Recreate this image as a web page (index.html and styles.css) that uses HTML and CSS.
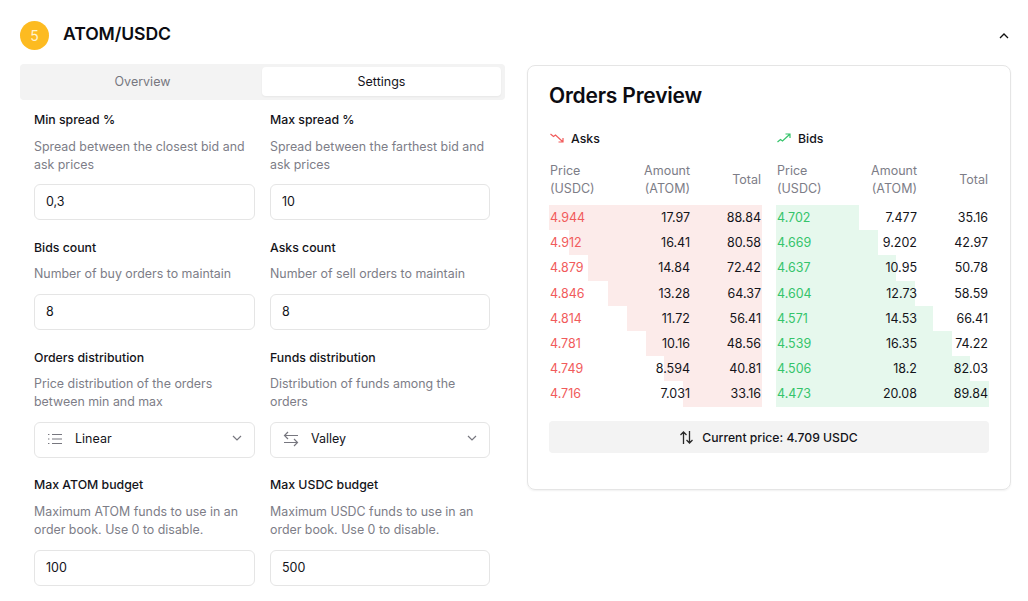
FILE: index.html
```html
<!DOCTYPE html>
<html lang="en">
<head>
<meta charset="utf-8">
<title>ATOM/USDC</title>
<link rel="stylesheet" href="styles.css">
</head>
<body>
<div class="page">
  <header class="head">
    <span class="step">5</span>
    <h1 class="pair">ATOM/USDC</h1>
    <svg class="collapse" width="10" height="6" viewBox="0 0 10 6"><path d="M1 5l4-4 4 4" fill="none" stroke="#111" stroke-width="1.3"/></svg>
  </header>
  <main class="columns">
    <section class="left">
      <div class="tabs">
        <div class="tab">Overview</div>
        <div class="tab active">Settings</div>
      </div>
      <div class="form">
        <div class="field">
          <div class="label">Min spread %</div>
          <p class="desc">Spread between the closest bid and ask prices</p>
          <input class="input" value="0,3">
        </div>
        <div class="field">
          <div class="label">Max spread %</div>
          <p class="desc">Spread between the farthest bid and ask prices</p>
          <input class="input" value="10">
        </div>
        <div class="field">
          <div class="label">Bids count</div>
          <p class="desc">Number of buy orders to maintain</p>
          <input class="input" value="8">
        </div>
        <div class="field">
          <div class="label">Asks count</div>
          <p class="desc">Number of sell orders to maintain</p>
          <input class="input" value="8">
        </div>
        <div class="field">
          <div class="label">Orders distribution</div>
          <p class="desc">Price distribution of the orders between min and max</p>
          <div class="select">
            <svg class="sel-icon" width="16" height="16" viewBox="0 0 16 16" fill="none" stroke="#77777f" stroke-width="1.2"><path d="M5 3.5h10M5 8h10M5 12.5h10M1 3.5h1.4M1 8h1.4M1 12.5h1.4"/></svg>
            <span class="sel-text">Linear</span>
            <svg class="chev" width="10" height="6" viewBox="0 0 10 6"><path d="M1 1l4 4 4-4" fill="none" stroke="#77777f" stroke-width="1.2"/></svg>
          </div>
        </div>
        <div class="field">
          <div class="label">Funds distribution</div>
          <p class="desc">Distribution of funds among the orders</p>
          <div class="select">
            <svg class="sel-icon" width="16" height="16" viewBox="0 0 16 16" fill="none" stroke="#77777f" stroke-width="1.2"><path d="M15 4.5H1.5M5 1L1.5 4.5 5 8M1 11.5h13.5M11 8l3.5 3.5L11 15"/></svg>
            <span class="sel-text">Valley</span>
            <svg class="chev" width="10" height="6" viewBox="0 0 10 6"><path d="M1 1l4 4 4-4" fill="none" stroke="#77777f" stroke-width="1.2"/></svg>
          </div>
        </div>
        <div class="field">
          <div class="label">Max ATOM budget</div>
          <p class="desc">Maximum ATOM funds to use in an order book. Use 0 to disable.</p>
          <input class="input" value="100">
        </div>
        <div class="field">
          <div class="label">Max USDC budget</div>
          <p class="desc">Maximum USDC funds to use in an order book. Use 0 to disable.</p>
          <input class="input" value="500">
        </div>
      </div>
    </section>
    <section class="card">
      <h2 class="card-title">Orders Preview</h2>
      <div class="books">
        <div class="book asks">
          <div class="side">
            <svg width="14" height="10" viewBox="0 0 14 10" fill="none" stroke="#f15b5b" stroke-width="1.2"><path d="M0.5 1L3.5 3.5 5.5 2l7 6.5M8.5 9h4.5V5"/></svg>
            <span>Asks</span>
          </div>
          <div class="row th"><span>Price<br>(USDC)</span><span class="num">Amount<br>(ATOM)</span><span class="num">Total</span></div>
          <div class="row"><i class="bar" style="width:100%"></i><span class="price">4.944</span><span class="num">17.97</span><span class="num">88.84</span></div>
          <div class="row"><i class="bar" style="width:90.7%"></i><span class="price">4.912</span><span class="num">16.41</span><span class="num">80.58</span></div>
          <div class="row"><i class="bar" style="width:81.5%"></i><span class="price">4.879</span><span class="num">14.84</span><span class="num">72.42</span></div>
          <div class="row"><i class="bar" style="width:72.5%"></i><span class="price">4.846</span><span class="num">13.28</span><span class="num">64.37</span></div>
          <div class="row"><i class="bar" style="width:63.5%"></i><span class="price">4.814</span><span class="num">11.72</span><span class="num">56.41</span></div>
          <div class="row"><i class="bar" style="width:54.7%"></i><span class="price">4.781</span><span class="num">10.16</span><span class="num">48.56</span></div>
          <div class="row"><i class="bar" style="width:45.9%"></i><span class="price">4.749</span><span class="num">8.594</span><span class="num">40.81</span></div>
          <div class="row"><i class="bar" style="width:37.3%"></i><span class="price">4.716</span><span class="num">7.031</span><span class="num">33.16</span></div>
        </div>
        <div class="book bids">
          <div class="side">
            <svg width="14" height="10" viewBox="0 0 14 10" fill="none" stroke="#35c46b" stroke-width="1.2"><path d="M0.5 9L3.5 6.5 5.5 8l7-6.5M8.5 1h4.5v4"/></svg>
            <span>Bids</span>
          </div>
          <div class="row th"><span>Price<br>(USDC)</span><span class="num">Amount<br>(ATOM)</span><span class="num">Total</span></div>
          <div class="row"><i class="bar" style="width:39.1%"></i><span class="price">4.702</span><span class="num">7.477</span><span class="num">35.16</span></div>
          <div class="row"><i class="bar" style="width:47.8%"></i><span class="price">4.669</span><span class="num">9.202</span><span class="num">42.97</span></div>
          <div class="row"><i class="bar" style="width:56.5%"></i><span class="price">4.637</span><span class="num">10.95</span><span class="num">50.78</span></div>
          <div class="row"><i class="bar" style="width:65.2%"></i><span class="price">4.604</span><span class="num">12.73</span><span class="num">58.59</span></div>
          <div class="row"><i class="bar" style="width:73.9%"></i><span class="price">4.571</span><span class="num">14.53</span><span class="num">66.41</span></div>
          <div class="row"><i class="bar" style="width:82.6%"></i><span class="price">4.539</span><span class="num">16.35</span><span class="num">74.22</span></div>
          <div class="row"><i class="bar" style="width:91.3%"></i><span class="price">4.506</span><span class="num">18.2</span><span class="num">82.03</span></div>
          <div class="row"><i class="bar" style="width:100%"></i><span class="price">4.473</span><span class="num">20.08</span><span class="num">89.84</span></div>
        </div>
      </div>
      <div class="current">
        <svg width="13" height="13" viewBox="0 0 13 13" fill="none" stroke="#2a2a2a" stroke-width="1.3"><path d="M3.5 13V1M0.5 4l3-3 3 3M9.5 0v12M6.5 9l3 3 3-3"/></svg>
        <span>Current price: 4.709 USDC</span>
      </div>
    </section>
  </main>
</div>
</body>
</html>
```

FILE: styles.css
```css
* { box-sizing: border-box; }
html, body { margin: 0; height: 601px; overflow: hidden; background: #fff; }
body { font-family: "Inter", "Open Sans", sans-serif; font-size: 12.5px; color: #14141a; }
.page { padding: 21px 18px 0 20px; }

.head { display: flex; align-items: center; height: 29px; }
.step { width: 29px; height: 29px; border-radius: 50%; background: #fdbb21; color: #fff3d0; font-size: 14px; display: flex; align-items: center; justify-content: center; }
.pair { margin: 0 0 4px 14px; font-size: 17.6px; line-height: 24px; font-weight: 600; color: #0c0c12; letter-spacing: -0.1px; }
.collapse { margin: 0 1px 0 auto; }

.columns { display: flex; gap: 22px; align-items: flex-start; margin-top: 14px; }
.left { width: 485px; flex: none; }
.tabs { display: grid; grid-template-columns: 239px 239px; height: 36px; padding: 3px 4px 4px 3px; background: #f3f3f3; border-radius: 4px; }
.tab { display: flex; align-items: center; justify-content: center; color: #77777f; border-radius: 4px; }
.tab.active { background: #fff; color: #14141a; box-shadow: 0 1px 2px rgba(0,0,0,.05); }

.form { display: grid; grid-template-columns: 221px 220px; column-gap: 15px; row-gap: 18px; padding: 10px 0 0 14px; }
.field { min-width: 0; }
.label { height: 18px; line-height: 20px; font-size: 12.3px; font-weight: 500; color: #14141a; }
.field:nth-child(n+7) .label { line-height: 18px; }
.desc { margin: 8.5px 0 11.5px; height: 36px; line-height: 18px; color: #7d7d87; font-size: 12.4px; }
.field:nth-child(-n+2) .desc { margin: 10px 0; }
.field:nth-child(3) .desc, .field:nth-child(4) .desc { height: 18px; }
.input, .select { display: flex; align-items: center; width: 100%; height: 36px; padding: 0 11px 2px; border: 1px solid #e5e5e5; border-radius: 6px; background: #fff; font: inherit; color: #14141a; outline: none; }
.select { padding: 0 12px 3px; }
.sel-icon { flex: none; margin-right: 12px; }
.chev { margin: -2px 0 0 auto; flex: none; }

.card { width: 484px; height: 425px; flex: none; margin-top: 1px; padding: 16px 21px 0 21px; border: 1px solid #e5e5e5; border-radius: 8px; box-shadow: 0 1px 2px rgba(0,0,0,.06); }
.card-title { margin: 0; font-size: 21px; line-height: 28px; font-weight: 600; color: #0c0c12; letter-spacing: -0.2px; }
.books { display: flex; gap: 14px; margin-top: 18px; }
.book { width: 213px; }
.side { display: flex; align-items: center; gap: 7px; height: 20px; padding-left: 1px; font-weight: 500; font-size: 12.3px; }
.row { position: relative; display: grid; grid-template-columns: 70px 70px 71px; height: 25.2px; padding: 0 1px; align-items: center; color: #14141a; }
.row > span { position: relative; }
.row.th { height: 43px; margin-top: 14px; padding-bottom: 7px; line-height: 18px; color: #7d7d87; }
.num { text-align: right; }
.bar { position: absolute; top: 0; bottom: 0; }
.asks .bar { right: 0; background: #fcebea; }
.bids .bar { left: 0; background: #e6f8ed; }
.asks .price { color: #f15b5b; }
.bids .price { color: #35c46b; }
.current { display: flex; align-items: center; justify-content: center; gap: 9px; height: 32px; margin-top: 14px; padding-top: 1px; background: #f3f3f3; border-radius: 4px; font-weight: 500; font-size: 12.2px; }
```
